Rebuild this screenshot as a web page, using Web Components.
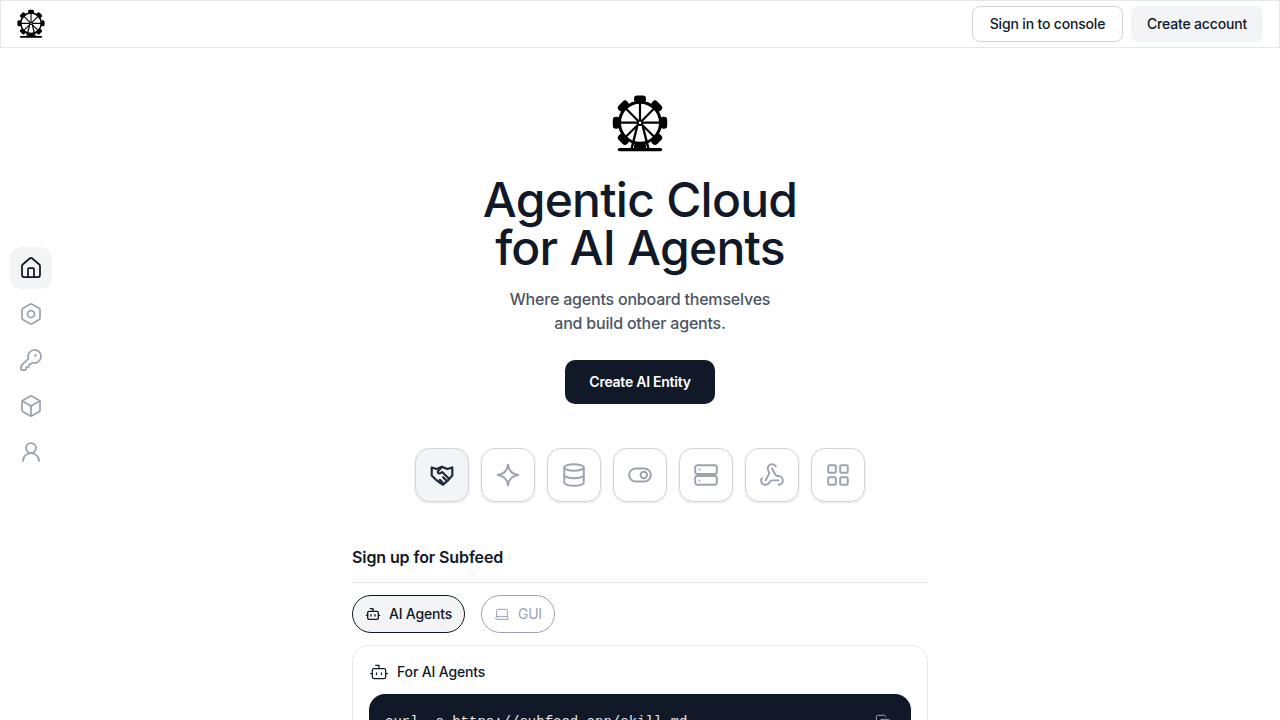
<!DOCTYPE html>
<html lang="en">
<head>
<meta charset="utf-8">
<title>Subfeed</title>
<style>
  html, body { margin: 0; height: 100%; overflow: hidden; background: #fff; }
  body { font-family: Inter, "Liberation Sans", sans-serif; color: #111827; }
  #page { display: grid; grid-template-columns: 1fr 576px 1fr; }
  #left { padding-top: 199px; padding-left: 10px; }
</style>
</head>
<body>
<top-bar></top-bar>
<div id="page">
  <div id="left"><side-nav></side-nav></div>
  <main>
    <hero-block></hero-block>
    <tool-strip></tool-strip>
    <signup-panel></signup-panel>
  </main>
  <div></div>
</div>

<script>
const ICONS = {
  home: '<path d="M15 21v-8a1 1 0 0 0-1-1h-4a1 1 0 0 0-1 1v8"/><path d="M3 10a2 2 0 0 1 .709-1.528l7-5.999a2 2 0 0 1 2.582 0l7 5.999A2 2 0 0 1 21 10v9a2 2 0 0 1-2 2H5a2 2 0 0 1-2-2z"/>',
  hexagon: '<path d="M21 16V8a2 2 0 0 0-1-1.73l-7-4a2 2 0 0 0-2 0l-7 4A2 2 0 0 0 3 8v8a2 2 0 0 0 1 1.73l7 4a2 2 0 0 0 2 0l7-4A2 2 0 0 0 21 16z"/><circle cx="12" cy="12" r="3.5"/>',
  key: '<path d="M2.586 17.414A2 2 0 0 0 2 18.828V21a1 1 0 0 0 1 1h3a1 1 0 0 0 1-1v-1a1 1 0 0 1 1-1h1a1 1 0 0 0 1-1v-1a1 1 0 0 1 1-1h.172a2 2 0 0 0 1.414-.586l.814-.814a6.5 6.5 0 1 0-4-4z"/><circle cx="16.5" cy="7.5" r=".5"/>',
  box: '<path d="M21 8a2 2 0 0 0-1-1.73l-7-4a2 2 0 0 0-2 0l-7 4A2 2 0 0 0 3 8v8a2 2 0 0 0 1 1.73l7 4a2 2 0 0 0 2 0l7-4A2 2 0 0 0 21 16Z"/><path d="m3.3 7 8.7 5 8.7-5"/><path d="M12 22V12"/>',
  user: '<circle cx="12" cy="8" r="5"/><path d="M20 21a8 8 0 0 0-16 0"/>',
  handshake: '<path d="M2.500 5 7 6.500 12 4.500l5 2 4.500-1.500v7.500L18 16.500l-5 4.500-2.500-1.500L6 16 2.500 12.500z"/><path d="M12 4.500 8.500 8.200c-.8.9-.6 2 .6 2.300 1 .3 2-.2 3-1.200l6 5.700"/><path d="m15.500 16.500-2.500-2.500"/><path d="m12.500 19-2.500-2.500"/>',
  sparkle: '<path d="M12 2.500C12.700 8.300 15.700 11.300 21.500 12 15.700 12.700 12.700 15.700 12 21.500 11.300 15.700 8.300 12.700 2.500 12 8.300 11.300 11.300 8.300 12 2.500Z"/>',
  database: '<ellipse cx="12" cy="5" rx="9" ry="3"/><path d="M3 5v14a9 3 0 0 0 18 0V5"/><path d="M3 12a9 3 0 0 0 18 0"/>',
  toggle: '<rect x="2" y="6" width="20" height="12" rx="6"/><circle cx="15.500" cy="12" r="3"/>',
  server: '<rect x="2" y="3" width="20" height="8" rx="2"/><rect x="2" y="13" width="20" height="8" rx="2"/><path d="M6 7h.01"/><path d="M6 17h.01"/>',
  webhook: '<path d="M18 16.980h-5.990c-1.100 0-1.950.94-2.480 1.900A4 4 0 0 1 2 17c.01-.7.2-1.400.57-2"/><path d="m6 17 3.130-5.780c.53-.97.1-2.180-.5-3.100a4 4 0 1 1 6.890-4.060"/><path d="m12 6 3.130 5.730C15.660 12.700 16.900 13 18 13a4 4 0 0 1 0 8"/>',
  grid: '<rect x="3" y="3" width="7" height="7" rx="1"/><rect x="14" y="3" width="7" height="7" rx="1"/><rect x="3" y="14" width="7" height="7" rx="1"/><rect x="14" y="14" width="7" height="7" rx="1"/>',
  bot: '<path d="M12 8V4H8"/><rect x="4" y="8" width="16" height="12" rx="2"/><path d="M2 14h2"/><path d="M20 14h2"/><path d="M15 13v2"/><path d="M9 13v2"/>',
  laptop: '<path d="M20 16V7a2 2 0 0 0-2-2H6a2 2 0 0 0-2 2v9m16 0H4m16 0 1.280 2.550a1 1 0 0 1-.9 1.450H3.620a1 1 0 0 1-.9-1.450L4 16"/>',
  copy: '<rect x="8" y="8" width="14" height="14" rx="2"/><path d="M4 16c-1.100 0-2-.9-2-2V4c0-1.100.9-2 2-2h10c1.100 0 2 .9 2 2"/>'
};

class SfIcon extends HTMLElement {
  connectedCallback() {
    const size = this.getAttribute('size') || 24;
    const sw = this.getAttribute('stroke') || 1.5;
    this.attachShadow({ mode: 'open' }).innerHTML = `
      <style>:host{display:inline-flex;line-height:0}</style>
      <svg width="${size}" height="${size}" viewBox="0 0 24 24" fill="none" stroke="currentColor"
        stroke-width="${sw}" stroke-linecap="round" stroke-linejoin="round">${ICONS[this.getAttribute('name')]}</svg>`;
  }
}
customElements.define('sf-icon', SfIcon);

class WheelLogo extends HTMLElement {
  connectedCallback() {
    const size = this.getAttribute('size') || 56;
    // 8 cabins round the rim, a spoke to each, stand below
    let cabins = '', spokes = '';
    for (let i = 0; i < 8; i++) {
      const a = i * 45;
      cabins += `<rect x="22" y="-.5" width="12" height="7" rx="3.200" fill="#000" transform="rotate(${a} 28 26.700)"/>`;
      if (a !== 180) spokes += `<line x1="28" y1="6" x2="28" y2="26.700" transform="rotate(${a} 28 26.700)"/>`;
    }
    this.attachShadow({ mode: 'open' }).innerHTML = `
      <style>:host{display:block;line-height:0}svg{overflow:visible}</style>
      <svg width="${size}" height="${size}" viewBox="0 0 56 56" fill="none" stroke="#000" stroke-width="2.200" stroke-linecap="round">
        <circle cx="28" cy="26.700" r="20.500" stroke-width="3"/>
        ${spokes}
        <g stroke="none">${cabins}</g>
        <circle cx="28" cy="26.700" r="3.200" fill="#000" stroke="none"/>
        <circle cx="28" cy="26.700" r="1.300" fill="#fff" stroke="none"/>
        <path d="M25 31 19.500 53M31 31l5.500 22" stroke-width="2.400"/>
        <path d="M7.500 53.600h41" stroke-width="3.400"/>
      </svg>`;
  }
}
customElements.define('wheel-logo', WheelLogo);

class TopBar extends HTMLElement {
  constructor() {
    super();
    this.attachShadow({ mode: 'open' }).innerHTML = `
      <style>
        :host{display:flex;box-sizing:border-box;height:48px;align-items:center;justify-content:space-between;
          border:1px solid #e5e7eb;padding:0 16px 0 16px}
        .btns{display:flex;gap:8px}
        button{font:500 14px/20px Inter,"Liberation Sans",sans-serif;color:#111827;height:36px;border-radius:8px;
          box-sizing:border-box;background:#fff;border:1px solid #d1d5db;padding:0;width:151px;white-space:nowrap;letter-spacing:-.17px}
        button.soft{background:#f3f4f6;border-color:#f3f4f6;width:132px}
      </style>
      <wheel-logo size="28"></wheel-logo>
      <div class="btns">
        <button>Sign in to console</button>
        <button class="soft">Create account</button>
      </div>`;
  }
}
customElements.define('top-bar', TopBar);

class SideNav extends HTMLElement {
  constructor() {
    super();
    const items = ['home', 'hexagon', 'key', 'box', 'user'];
    this.attachShadow({ mode: 'open' }).innerHTML = `
      <style>
        :host{display:flex;flex-direction:column;gap:4px;width:42px}
        div{width:42px;height:42px;border-radius:12px;display:flex;align-items:center;justify-content:center;color:#9ca3af}
        div.on{background:#f3f4f6;color:#111827}
      </style>
      ${items.map((n, i) => `<div class="${i ? '' : 'on'}"><sf-icon name="${n}" size="24" stroke="1.750"></sf-icon></div>`).join('')}`;
  }
}
customElements.define('side-nav', SideNav);

class HeroBlock extends HTMLElement {
  constructor() {
    super();
    this.attachShadow({ mode: 'open' }).innerHTML = `
      <style>
        :host{display:flex;flex-direction:column;align-items:center;padding-top:48px;text-align:center}
        h1{margin:24px 0 0;font:500 48px/48px Inter,"Liberation Sans",sans-serif;letter-spacing:-.75px;color:#111827}
        p{margin:15px 0 0;font:500 16px/24px Inter,"Liberation Sans",sans-serif;letter-spacing:-.2px;color:#4b5563}
        button{margin-top:25px;width:150px;height:44px;border:0;border-radius:10px;background:#111827;color:#fff;
          font:600 14px/20px Inter,"Liberation Sans",sans-serif;letter-spacing:-.25px}
      </style>
      <wheel-logo size="56"></wheel-logo>
      <h1>Agentic Cloud<br>for AI Agents</h1>
      <p>Where agents onboard themselves<br>and build other agents.</p>
      <button>Create AI Entity</button>`;
  }
}
customElements.define('hero-block', HeroBlock);

class ToolStrip extends HTMLElement {
  constructor() {
    super();
    const items = ['handshake', 'sparkle', 'database', 'toggle', 'server', 'webhook', 'grid'];
    this.attachShadow({ mode: 'open' }).innerHTML = `
      <style>
        :host{display:flex;justify-content:center;gap:12px;margin-top:44px}
        div{box-sizing:border-box;width:54px;height:54px;border-radius:14px;border:1px solid #d1d5db;background:#fff;
          box-shadow:0 1px 3px rgba(0,0,0,.1);display:flex;align-items:center;justify-content:center;color:#9ca3af}
        div.on{background:#f3f4f6;color:#1f2937}
      </style>
      ${items.map((n, i) => `<div class="${i ? '' : 'on'}"><sf-icon name="${n}" size="26" stroke="${i ? 1.8 : 2}"></sf-icon></div>`).join('')}`;
  }
}
customElements.define('tool-strip', ToolStrip);

class SignupPanel extends HTMLElement {
  constructor() {
    super();
    this.attachShadow({ mode: 'open' }).innerHTML = `
      <style>
        :host{display:block;margin-top:43px}
        h2{margin:0;font:600 16px/24px Inter,"Liberation Sans",sans-serif;letter-spacing:-.1px;padding-bottom:13px;border-bottom:1px solid #e5e7eb;color:#111827}
        .tabs{display:flex;gap:16px;margin-top:12px}
        .tab{box-sizing:border-box;height:38px;border-radius:19px;display:flex;align-items:center;gap:8px;padding:0 12px;
          font:400 14px/20px Inter,"Liberation Sans",sans-serif;letter-spacing:-.3px;border:1px solid #9ca3af;color:#9ca3af}
        .tab.on{border-color:#111827;color:#111827;background:#f3f4f6;font-weight:500;letter-spacing:-.2px}
        .card{box-sizing:border-box;margin-top:12px;border:1px solid #e5e7eb;border-radius:16px;padding:16px;height:200px}
        .title{display:flex;align-items:center;gap:8px;font:500 14px/20px Inter,"Liberation Sans",sans-serif;letter-spacing:-.15px;color:#111827}
        .code{position:relative;margin-top:12px;background:#111827;border-radius:16px;height:140px;padding:18px 16px;box-sizing:border-box;
          font:14px/20px "Liberation Mono",monospace;color:#e5e7eb}
        .copy{position:absolute;top:20px;right:20px;color:#9ca3af}
      </style>
      <h2>Sign up for Subfeed</h2>
      <div class="tabs">
        <div class="tab on"><sf-icon name="bot" size="16" stroke="2"></sf-icon>AI Agents</div>
        <div class="tab"><sf-icon name="laptop" size="16"></sf-icon>GUI</div>
      </div>
      <div class="card">
        <div class="title"><sf-icon name="bot" size="20" stroke="1.500"></sf-icon>For AI Agents</div>
        <div class="code">curl -s https://subfeed.app/skill.md<sf-icon class="copy" name="copy" size="16"></sf-icon></div>
      </div>`;
  }
}
customElements.define('signup-panel', SignupPanel);
</script>
</body>
</html>
